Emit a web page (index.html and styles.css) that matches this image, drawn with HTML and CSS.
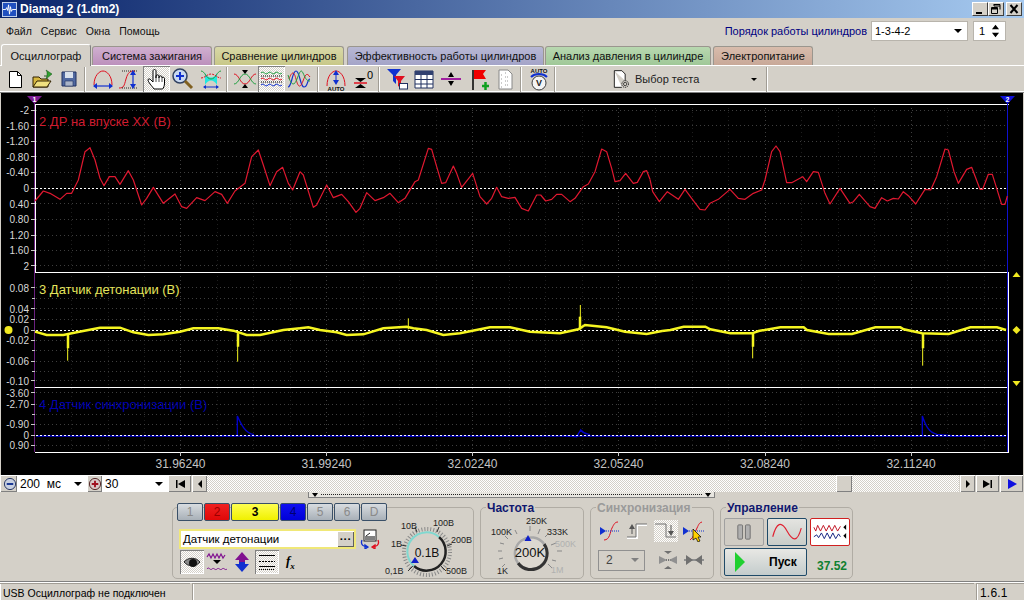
FILE: index.html
```html
<!DOCTYPE html>
<html lang="ru">
<head>
<meta charset="utf-8">
<title>Diamag 2</title>
<link rel="stylesheet" href="styles.css">
</head>
<body>
<div class="app">
  <header class="titlebar">
    <svg class="app-icon" viewBox="0 0 16 16"><rect x="0.5" y="0.5" width="15" height="15" fill="#2050c0" stroke="#c8d8f0"/><path d="M1 8h3l1-2 1 3 1-6 1 10 1-8 1 5 1-2h4" fill="none" stroke="#fff"/></svg>
    <span class="title-text">Diamag 2 (1.dm2)</span>
    <div class="win-btns">
      <span class="win-btn"><svg viewBox="0 0 14 12"><rect x="3" y="9" width="6" height="2"/></svg></span>
      <span class="win-btn"><svg viewBox="0 0 14 12"><path d="M5 1.5h6v5M5 1v2h6M2.500 5.500h6v5h-6zM2.500 4.500h6v1.500h-6z" fill="none" stroke="#000"/></svg></span>
      <span class="win-btn win-close"><svg viewBox="0 0 14 12"><path d="M3.500 2l7 8M10.500 2l-7 8" stroke="#000" stroke-width="2"/></svg></span>
    </div>
  </header>

  <nav class="menubar">
    <span class="menu-item">Файл</span>
    <span class="menu-item">Сервис</span>
    <span class="menu-item">Окна</span>
    <span class="menu-item">Помощь</span>
    <span class="order-label">Порядок работы цилиндров</span>
    <div class="combo combo-order"><span>1-3-4-2</span><i class="combo-arrow"></i></div>
    <div class="spinner"><span>1</span><svg viewBox="0 0 10 18"><path d="M5 2l4 5H1z M5 16l4-5H1z"/></svg></div>
  </nav>

  <div class="tabs">
    <span class="tab tab-active">Осциллограф</span>
    <span class="tab tab-ign">Система зажигания</span>
    <span class="tab tab-cmp">Сравнение цилиндров</span>
    <span class="tab tab-eff">Эффективность работы цилиндров</span>
    <span class="tab tab-prs">Анализ давления в цилиндре</span>
    <span class="tab tab-pwr">Электропитание</span>
  </div>

  <div class="toolbar">
    <span class="tool"><svg viewBox="0 0 24 24"><path d="M6.500 4.500h8l4 4v12h-12z" fill="#fff" stroke="#000"/><path d="M14.500 4.500v4h4" fill="none" stroke="#000"/></svg></span>
    <span class="tool"><svg viewBox="0 0 24 24"><path d="M3 20V10h6l2 2h7v8z" fill="#d8b840" stroke="#302000"/><path d="M3 20l4-6h14l-4 6z" fill="#f0e080" stroke="#302000"/><path d="M14 9h3V5l-1-2 6 4-6 5 1-3z" fill="#30a030" stroke="#105010" stroke-width=".5"/></svg></span>
    <span class="tool"><svg viewBox="0 0 24 24"><path d="M5 5h14v14H5z" fill="#5068a0" stroke="#203060"/><path d="M8 5h8v6H8z" fill="#d8e0ec"/><path d="M8 14h8v5H8z" fill="#aab4c8" stroke="#203060" stroke-width=".6"/></svg></span>
    <i class="sep"></i>
    <span class="tool"><svg viewBox="0 0 24 24"><path d="M3 18C3 9 8 4 12 4s9 5 9 14" fill="none" stroke="#e01020"/><path d="M3 19h18" stroke="#1030d0" stroke-width="1.200"/><path d="M2 19l4-3v6zM22 19l-4-3v6z" fill="#1030d0"/></svg></span>
    <span class="tool"><svg viewBox="0 0 24 24"><path d="M1 21c5 0 5-2 7-9s4-8 9-8" fill="none" stroke="#e01020"/><path d="M4 4h16M4 21h16" stroke="#000" stroke-width=".8" stroke-dasharray="1 1"/><path d="M15 5v15" stroke="#1030d0" stroke-width="1.200"/><path d="M15 3l-3 5h6zM15 22l-3-5h6z" fill="#1030d0"/></svg></span>
    <span class="tool tool-on"><svg viewBox="0 0 24 24"><path d="M9 22C7 19 3 15 3 13c0-1.500 2-1.500 3 0l2 2V4c0-2 3-2 3 0v7-2c0-1.500 3-1.500 3 0v2-1c0-1.500 3-1.500 3 0v1c0-1 2.500-1 2.500.5V16c0 3-1 5-2 6z" fill="#fff" stroke="#000"/><path d="M11 11v4M14 11v4M17 11v4" stroke="#000" stroke-width=".7"/></svg></span>
    <span class="tool tool-shift"><svg viewBox="0 0 24 24"><circle cx="10" cy="9" r="7" fill="#c8d8f0" stroke="#304060" stroke-width="1.500"/><path d="M6 9h8M10 5v8" stroke="#1030d0" stroke-width="2"/><path d="M15 14l7 7" stroke="#806020" stroke-width="3"/></svg></span>
    <span class="tool"><svg viewBox="0 0 24 24"><path d="M6 6c3 6 9 6 12 0v12c-3-6-9-6-12 0z" fill="#20e8e0"/><path d="M2 4c4 0 5 8 10 8s6-8 10-8" fill="none" stroke="#20a040"/><path d="M2 11c4 0 6-4 10-4s6 4 10 4" fill="none" stroke="#e01020" stroke-dasharray="2 1"/><path d="M5 20h14" stroke="#1030d0"/><path d="M4 20l3-2v4zM20 20l-3-2v4z" fill="#1030d0"/></svg></span>
    <i class="sep"></i>
    <span class="tool"><svg viewBox="0 0 24 24"><path d="M1 7c5 0 6 10 11 10s6-10 11-10" fill="none" stroke="#e01020"/><path d="M1 17c5 0 6-10 11-10s6 10 11 10" fill="none" stroke="#20a040"/><path d="M12 7L9 3h6zM12 17l-3 4h6z"/></svg></span>
    <span class="tool tool-on"><svg viewBox="0 0 24 24"><path d="M1 6c3-3 4 3 7 0s4 3 7 0 4 3 7 0" fill="none" stroke="#20a040"/><path d="M1 9h22M1 15h22" stroke="#000" stroke-dasharray="1 1"/><path d="M1 12c3-3 4 3 7 0s4 3 7 0 4 3 7 0" fill="none" stroke="#e01020"/><path d="M1 18c3-3 4 3 7 0s4 3 7 0 4 3 7 0" fill="none" stroke="#1030d0"/></svg></span>
    <span class="tool"><svg viewBox="0 0 24 24"><path d="M1 20C5 20 5 4 9 4s4 16 8 16 3-8 6-8" fill="none" stroke="#1030d0" stroke-width="1.200"/><path d="M2 12c3-8 5-8 7 0s4 10 7 2 4-8 7-4" fill="none" stroke="#e01020"/><path d="M1 8c3 10 6 12 9 4s4-10 6-6 3 8 7 8" fill="none" stroke="#20a040"/></svg></span>
    <i class="sep sep-wide"></i>
    <span class="tool"><svg viewBox="0 0 24 24"><path d="M3 19C3 9 8 4 12 4s9 5 9 15" fill="none" stroke="#e01020"/><path d="M12 5v11" stroke="#1030d0"/><path d="M12 3L9 8h6zM12 18l-3-5h6z" fill="#1030d0"/><text class="tool-tiny" x="12" y="24">AUTO</text></svg></span>
    <span class="tool"><svg viewBox="0 0 24 24"><path d="M4 11h11l-5.500 4zM4 21h11l-5.500-4z" fill="#000"/><path d="M3 16h13" stroke="#e01020" stroke-width="1.500"/><text class="tool-zero" x="16" y="12">0</text></svg></span>
    <i class="sep"></i>
    <span class="tool"><svg viewBox="0 0 24 24"><path d="M2 2h14l-5 6v9l-3-3V8z" fill="#1030d0"/><path d="M9 9h11l-4 5v7l-3-2v-5z" fill="#e01020"/><rect x="14.500" y="16.500" width="8" height="5.500" fill="#fff" stroke="#203060"/></svg></span>
    <span class="tool"><svg viewBox="0 0 24 24"><path d="M3 4h18v17H3z" fill="#fff" stroke="#203060"/><path d="M3 4h18v4H3z" fill="#304070"/><path d="M9 8v13M15 8v13M3 12.500h18M3 17h18" stroke="#203060"/></svg></span>
    <span class="tool"><svg viewBox="0 0 24 24"><path d="M2 12h20" stroke="#a020a0" stroke-width="2"/><path d="M12 5L9 10h6zM12 19l-3-5h6z"/></svg></span>
    <span class="tool"><svg viewBox="0 0 24 24"><path d="M7 3v20" stroke="#000" stroke-width="1.500"/><path d="M8 3h12l-3 4 3 5H8z" fill="#f00000"/><path d="M16 19h7M19.500 15v8" stroke="#10a020" stroke-width="2.500"/></svg></span>
    <span class="tool"><svg viewBox="0 0 24 24"><path d="M6 3h9l4 4v15H6z" fill="#fff" stroke="#888"/><path d="M8 8h2M8 12h2M8 16h2M8 20h2M12 6h2M12 10h4M12 14h4M12 18h4" stroke="#999" stroke-dasharray="1 1"/></svg></span>
    <i class="sep"></i>
    <span class="tool"><svg viewBox="0 0 24 24"><text class="tool-tiny" x="12" y="6">AUTO</text><path d="M4 10c4-4 12-4 16 0" fill="none" stroke="#1030d0" stroke-width="2"/><circle cx="12" cy="16" r="7" fill="#f4f4f4" stroke="#404040"/><text class="tool-v" x="12" y="19">V</text></svg></span>
    <i class="sep"></i>
    <div class="test-select">
      <svg viewBox="0 0 24 24"><path d="M4 2h9l4 4v8M4 2v20h9" fill="#fff" stroke="#000"/><circle cx="17" cy="18" r="4" fill="none" stroke="#000" stroke-width="1" stroke-dasharray="1.500 1"/><circle cx="17" cy="18" r="2" fill="none" stroke="#000" stroke-width=".8"/></svg>
      <span>Выбор теста</span>
      <i class="small-arrow"></i>
    </div>
    <i class="sep"></i>
  </div>

  <svg class="scope" viewBox="0 93 1024 382" width="1024" height="382">
    <rect class="bg-black" x="0" y="93" width="1024" height="382"/>
    <path class="edge" d="M.5 93v382M1023.500 93v382"/>
    <path class="grid-minor" d="M71.500 104v348M108.500 104v348M144.500 104v348M217.500 104v348M253.500 104v348M290.500 104v348M363.500 104v348M399.500 104v348M436.500 104v348M509.500 104v348M545.500 104v348M582.500 104v348M655.500 104v348M692.500 104v348M728.500 104v348M801.500 104v348M838.500 104v348M874.500 104v348M947.500 104v348M984.500 104v348"/>
    <path class="grid" d="M180.500 104v348M326.500 104v348M472.500 104v348M618.500 104v348M765.500 104v348M911.500 104v348"/>
    <path class="grid" d="M36 110.500h971M36 125.500h971M36 141.500h971M36 156.500h971M36 172.500h971M36 203.500h971M36 219.500h971M36 235.500h971M36 250.500h971M36 265.500h971M36 287.500h971M36 298.500h971M36 308.500h971M36 319.500h971M36 340.500h971M36 350.500h971M36 361.500h971M36 371.500h971M36 380.500h971M36 392.500h971M36 404.500h971M36 414.500h971M36 424.500h971M36 445.500h971"/>

    <path class="frame-purple" d="M34.500 100V452"/>
    <path class="frame-white" d="M35.500 104V272M35 104.500h974M35 272.500h974M35 387.500h974M35 452.500h974M1008.500 272v181"/>
    <path class="frame-blue" d="M1007.500 100V452"/>
    <path class="axis-tick" d="M31 110.500h4M31 125.500h4M31 141.500h4M31 156.500h4M31 172.500h4M31 188.500h4M31 203.500h4M31 219.500h4M31 235.500h4M31 250.500h4M31 265.500h4M31 287.500h4M32 298.500h3M31 308.500h4M31 319.500h4M31 330.500h4M31 340.500h4M32 350.500h3M31 361.500h4M32 371.500h3M31 380.500h4M31 392.500h4M31 404.500h4M32 414.500h3M31 424.500h4M31 435.500h4M31 445.500h4M180.500 452v4M326.500 452v4M472.500 452v4M618.500 452v4M765.500 452v4M911.500 452v4"/>

    <g class="ylab">
      <text x="29" y="114">-2</text><text x="29" y="129.500">-1.60</text><text x="29" y="145">-1.20</text><text x="29" y="160.500">-0.80</text><text x="29" y="176">-0.40</text><text x="29" y="192">0</text><text x="29" y="207.500">0.40</text><text x="29" y="223">0.80</text><text x="29" y="239">1.20</text><text x="29" y="254">1.60</text><text x="29" y="269.500">2</text>
      <text x="29" y="291.500">0.08</text><text x="29" y="312.500">0.04</text><text x="29" y="323">0.02</text><text x="29" y="334">0</text><text x="29" y="344">-0.02</text><text x="29" y="365">-0.06</text><text x="29" y="384.500">-0.10</text>
      <text x="29" y="396.500">-3.60</text><text x="29" y="408">-2.70</text><text x="29" y="428">-0.90</text><text x="29" y="439">0</text><text x="29" y="449">0.90</text>
    </g>
    <g class="xlab">
      <text x="180.500" y="468">31.96240</text><text x="326.500" y="468">31.99240</text><text x="472.500" y="468">32.02240</text><text x="618.500" y="468">32.05240</text><text x="765" y="468">32.08240</text><text x="911" y="468">32.11240</text>
    </g>

    <path class="trace-blue" d="M36 436H1006"/>
    <g transform="translate(0,270) scale(.33333)"><path class="trace-blue" d="M660 497L700 497 712 496V438C722 460 735 490 762 494"/></g>
    <g transform="translate(300,270) scale(.33333)"><path class="trace-blue" d="M790 497L830 500 842 480C850 490 855 490 870 494M320 497L340 500"/></g>
    <g transform="translate(662,270) scale(.33333)"><path class="trace-blue" d="M740 499L775 497 781 496V438C790 465 800 488 825 493L880 498 960 498"/></g>
    <path class="zero" d="M36 188.500H1007M36 330.500H1007M36 435.500H1007"/>

    <g transform="translate(0,90) scale(.33333)"><polyline class="trace-red" points="105,333 130,303 150,310 180,328 200,310 215,310 235,270 255,185 270,173 285,210 300,265 312,287 328,260 345,260 360,283 385,242 400,270 425,345 440,325 460,292 490,340 525,312 545,350 560,355 590,323 615,332 645,305 665,313 682,340 705,303 735,280 755,200 775,180 790,225 810,287 830,245 848,232 865,280 878,300 900,245"/></g>
    <g transform="translate(280,130) scale(.33333)"><polyline class="trace-red" points="60,125 70,135 100,232 110,225 140,165 160,203 185,193 205,215 228,247 240,235 260,188 285,212 310,203 330,190 355,218 375,205 405,155 415,150 445,55 455,58 470,110 485,160 497,158 520,108 530,130 545,172 578,130 600,200 620,222 635,205 650,172 665,200 685,205 705,202 725,235 745,243 770,195 782,195 797,213 815,208 830,193 845,193 870,215 885,205 910,170 925,162 945,125 965,57 980,65 995,115 1005,155 1020,152 1037,130 1060,160 1072,157 1090,125 1100,122 1110,148"/></g>
    <g transform="translate(650,130) scale(.33333)"><polyline class="trace-red" points="0,148 8,185 28,215 52,185 85,208 105,178 125,205 150,238 165,240 180,220 205,208 240,178 265,205 285,208 310,190 335,180 345,150 365,65 378,48 390,65 410,158 425,158 458,140 470,155 490,125 505,127 525,190 540,222 570,175 600,220 610,215 628,193 660,230 675,235 695,203 712,213 730,205 745,207 760,185 775,197 797,222 825,178 842,180 860,140 885,57 895,60 912,125 925,160 950,118 965,112 990,178 998,178 1015,133 1027,133 1055,223 1065,223 1072,198"/></g>

    <g transform="translate(0,270) scale(.33333)"><polyline class="trace-yel" points="105,185 140,195 190,195 230,187 300,173 360,173 400,187 445,195 490,193 540,185 580,175 655,175 700,182 740,195 780,195 850,180 900,175"/><path class="spike" d="M203 195V272M713 190V275"/><path class="trace-yel" d="M204 195V235M714 190V230"/></g>
    <g transform="translate(300,270) scale(.33333)"><polyline class="trace-yel" points="0,175 25,172 60,180 110,187 140,195 190,193 250,175 320,170 340,175 380,180 430,195 480,190 570,172 630,172 690,185 780,190 835,178 855,165 920,172 975,185 1040,192 1086,183"/><path class="spike" d="M325 178V145M841 178V105"/><path class="trace-yel" d="M840 178V140"/></g>
    <g transform="translate(662,270) scale(.33333)"><polyline class="trace-yel" points="0,183 25,180 65,170 130,170 145,178 205,190 270,190 290,183 355,172 425,172 435,180 500,192 570,192 640,172 715,172 725,178 780,190 860,192 925,172 1005,172 1032,180"/><path class="spike" d="M272 190V265M782 190V287"/><path class="trace-yel" d="M273 190V230M783 190V235"/></g>

    <text class="name-red" x="39" y="126">2 ДР на впуске ХХ (В)</text>
    <text class="name-yel" x="39" y="294">3 Датчик детонации (В)</text>
    <text class="name-blue" x="39" y="409">4 Датчик синхронизации (В)</text>

    <path class="mark-purple" d="M27 96h15l-7.500 8z"/><text class="mark-num" x="34.500" y="102">1</text>
    <path class="mark-blue" d="M1000 96h15l-7.500 8z"/><text class="mark-num" x="1007.500" y="102">2</text>
    <circle class="mark-yel" cx="8.500" cy="330" r="4"/>
    <path class="mark-yel" d="M1012.500 277l4-5 4 5zM1016.500 326l4 4-4 4-4-4zM1012.500 381l4 5 4-5z"/>
  </svg>

  <div class="scrollrow">
    <span class="round-btn"><svg viewBox="0 0 15 15"><circle cx="7.500" cy="7.500" r="6" fill="#c8d0e0" stroke="#203060"/><path d="M4 7.500h7" stroke="#103090" stroke-width="2"/></svg></span>
    <div class="combo combo-ms"><span>200&nbsp; мс</span><i class="combo-arrow"></i></div>
    <span class="round-btn"><svg viewBox="0 0 15 15"><circle cx="7.500" cy="7.500" r="6" fill="#d8c8c8" stroke="#502020"/><path d="M4 7.500h7M7.500 4v7" stroke="#a01020" stroke-width="2"/></svg></span>
    <div class="combo combo-30"><span>30</span><i class="combo-arrow"></i></div>
    <span class="nav-btn nav-wide"><svg viewBox="0 0 14 10"><path d="M3 1v8h1.500V1zM12 1L5 5l7 4z"/></svg></span>
    <span class="nav-btn nav-narrow"><svg viewBox="0 0 8 10"><path d="M6 1L2 5l4 4z"/></svg></span>
    <div class="track"><span class="thumb"></span></div>
    <span class="nav-btn nav-narrow"><svg viewBox="0 0 8 10"><path d="M2 1l4 4-4 4z"/></svg></span>
    <span class="nav-btn nav-wide"><svg viewBox="0 0 14 10"><path d="M2 1l7 4-7 4zM9.500 1v8H11V1z"/></svg></span>
    <span class="nav-btn nav-wide"><svg viewBox="0 0 14 10"><path class="play-blue" d="M3 0l9 5-9 5z"/></svg></span>
  </div>

  <div class="bottom">
    <div class="splitter"><i class="split-arrow"></i><span class="split-dots"></span><i class="split-arrow"></i></div>
    <div class="groups">
      <section class="group group-channel">
        <div class="channel-left">
          <div class="channels">
            <span class="chan chan-off">1</span>
            <span class="chan chan-red">2</span>
            <span class="chan chan-yellow">3</span>
            <span class="chan chan-blue">4</span>
            <span class="chan chan-off">5</span>
            <span class="chan chan-off">6</span>
            <span class="chan chan-off">D</span>
          </div>
          <div class="name-row">
            <div class="name-field"><span>Датчик детонации</span><span class="dots-btn">···</span></div>
            <svg class="swap-icon" viewBox="0 0 20 20"><rect x="4" y="1" width="12" height="11" fill="#fff" stroke="#222"/><rect x="5" y="7" width="10" height="4" fill="#808080"/><path d="M6 7l4-3" stroke="#222"/><path d="M2 11c-2 5 2 7 6 7M8 18l-3-2v4z" fill="none" stroke="#1030d0" stroke-width="1.300"/><path d="M18 11c2 5-2 7-6 7M12 18l3-2v4z" fill="none" stroke="#e01020" stroke-width="1.300"/></svg>
          </div>
          <div class="chan-tools">
            <span class="ct ct-on"><svg viewBox="0 0 22 22"><path d="M3 11c4-5 12-5 16 0-4 5-12 5-16 0z" fill="#888" stroke="#222"/><circle cx="12" cy="12" r="4" fill="#111"/></svg></span>
            <span class="ct"><svg viewBox="0 0 22 22"><path d="M1 6l2-3 2 4 2-4 2 4 2-4 2 4 2-4 2 4 2-3" fill="none" stroke="#801090" stroke-width="1.200"/><path d="M7 9h8l-4 4z"/><path d="M1 18c2-3 3 2 5 0s3 2 5 0 3 2 5 0 3 2 5 0" fill="none" stroke="#801090"/></svg></span>
            <span class="ct"><svg viewBox="0 0 22 22"><path d="M11 1l7 8h-4v2H8V9H4z" fill="#801090"/><path d="M11 21l7-8h-4v-2H8v2H4z" fill="#1030d0"/></svg></span>
            <span class="ct ct-on"><svg viewBox="0 0 22 22"><path d="M3 4.500h16M3 15.500h16" stroke="#000"/><path d="M3 10.500h16" stroke="#000" stroke-dasharray="2 1"/><path d="M3 18.500h16" stroke="#000" stroke-dasharray="1 1"/></svg></span>
            <span class="fx">f<sub>x</sub></span>
          </div>
        </div>
        <svg class="knob-ch" viewBox="-2 1 100 71">
          <circle class="k-ticks" cx="52" cy="45" r="23"/>
          <path class="k-major" d="M38 59l-5 5M31 39l-5-1M42 25l-2-5M62 25l2-5M72 39l5-2M66 59l5 5"/>
          <circle class="k-face" cx="52" cy="45" r="20"/>
          <path class="k-dark" d="M64 30A19 19 0 1 1 39 59"/>
          <path class="k-cyan" d="M39 59A19 19 0 1 1 64 30"/>
          <path class="k-mark" d="M40 50l4 6h-8z"/>
          <text class="k-val" x="52" y="50">0.1В</text>
          <g class="k-lab"><text x="10" y="66.500">0,1В</text><text x="16" y="39.500">1В</text><text x="26" y="21.500">10В</text><text x="58" y="18.500">100В</text><text x="76" y="35.500">200В</text><text x="71" y="66.500">500В</text></g>
        </svg>
      </section>

      <section class="group group-freq">
        <h3 class="legend">Частота</h3>
        <svg class="knob-fr" viewBox="1 1 102 70">
          <path class="k-fine" d="M22 60l3-3M19 52l4-1M18 44h4M20 36l4 1M25 29l3 3M35 23l2 4M50 19v5M60 22l-2 5M68 27l-3 3M76 36l-5 2M82 44h-5M76 54l-4-1M72 61l-4-4"/>
          <circle class="f-face" cx="50" cy="45" r="16"/>
          <path class="f-dark" d="M64 37A16 16 0 0 1 38 56"/>
          <path class="f-light" d="M38 56A16 16 0 0 1 64 37"/>
          <path class="k-mark" d="M48 28l3.500 6h-7z"/>
          <text class="f-val" x="50" y="50">200K</text>
          <g class="k-lab"><text x="11" y="27.500">100K</text><text x="46" y="17">250K</text><text x="67" y="27.500">333K</text><text class="k-dim" x="75" y="39.500">500K</text><text x="17" y="66.500">1K</text><text class="k-dim" x="71" y="65.500">1M</text></g>
        </svg>
      </section>

      <section class="group group-sync">
        <h3 class="legend legend-dim">Синхронизация</h3>
        <div class="sync-row">
          <span class="sy"><svg viewBox="0 0 24 22"><path d="M6 20c6 0 6-8 8-12s3-6 6-6" fill="none" stroke="#e01020"/><path d="M2 7l6 4-6 4z" fill="#1030d0"/><path d="M8 11h14" stroke="#1030d0" stroke-dasharray="1 1"/></svg></span>
          <span class="sy"><svg viewBox="0 0 24 22"><path d="M1 18h10V5h10" fill="none" stroke="#fff" stroke-width="2"/><path d="M1 17h9V4h11" fill="none" stroke="#707070"/><path d="M6 14V6" stroke="#555"/><path d="M6 4L3 9h6z" fill="#555"/></svg></span>
          <span class="sy sy-on"><svg viewBox="0 0 24 22"><path d="M1 4h11v13h10" fill="none" stroke="#707070"/><path d="M17 5v8" stroke="#555"/><path d="M17 16l-3-5h6z" fill="#555"/></svg></span>
          <span class="sy"><svg viewBox="0 0 24 22"><path d="M8 20c4-3 5-8 7-12s2-5 5-6" fill="none" stroke="#e01020"/><path d="M1 7l6 4-6 4z" fill="#1030d0"/><path d="M7 11h15" stroke="#1030d0" stroke-dasharray="1 1"/><path d="M11 9v11l3-2 2 4 2-1-2-4h3z" fill="#ffd000" stroke="#000" stroke-width=".7"/></svg></span>
        </div>
        <div class="sync-row sync-row2">
          <div class="combo-dis"><span>2</span><i class="small-arrow dim-arrow"></i></div>
          <span class="sy"><svg viewBox="0 0 24 22"><path d="M4 11h16" stroke="#707070" stroke-width="2" stroke-dasharray="1 1"/><path d="M3 7l8 4-8 4zM21 7l-8 4 8 4z" fill="#909090"/><path d="M12 5l-4-3h8zM12 17l-4 3h8z" fill="#707070"/></svg></span>
          <span class="sy"><svg viewBox="0 0 24 22"><path d="M2 11h20" stroke="#909090" stroke-width="2"/><path d="M4 6l7 5-7 5zM20 6l-7 5 7 5z" fill="#707070"/></svg></span>
        </div>
      </section>

      <section class="group group-ctrl">
        <h3 class="legend">Управление</h3>
        <div class="ctrl-row">
          <span class="cb cb-dis"><svg viewBox="0 0 40 28"><rect x="13.500" y="6.500" width="5" height="15" rx="1" fill="#b0b0b0" stroke="#707070"/><rect x="21.500" y="6.500" width="5" height="15" rx="1" fill="#b0b0b0" stroke="#707070"/></svg></span>
          <span class="cb cb-act"><svg viewBox="0 0 40 28"><path d="M5 19C9 4 14 2 20 13s11 12 15-3" fill="none" stroke="#e02030" stroke-width="1.200"/></svg></span>
          <span class="cb cb-red"><svg viewBox="0 0 40 28"><path d="M3 9l2 4 2-6 3 6 3-6 3 6 3-6 3 6 3-6 3 6 3-5" fill="none" stroke="#c01020"/><path d="M3 19l3-2 2 3 3-5 3 6 3-6 3 6 3-6 3 6 3-5 2 3" fill="none" stroke="#102080"/><path d="M37 6v6l-3-3zM37 15v6l-3-3z"/></svg></span>
        </div>
        <div class="ctrl-row">
          <span class="cb cb-start"><svg viewBox="0 0 12 22"><path d="M1 1l10 10L1 21z" fill="#20d030"/></svg><b>Пуск</b></span>
          <span class="rate">37.52</span>
        </div>
      </section>
    </div>
  </div>

  <footer class="status">
    <span class="st st-a">USB Осциллограф не подключен</span>
    <span class="st st-b"></span>
    <span class="st st-c">1.6.1</span>
  </footer>
</div>
</body>
</html>
```

FILE: styles.css
```css
* { box-sizing: border-box; }
html, body { margin: 0; padding: 0; background: #d4d0c8; }
.app {
  width: 1024px; height: 600px; overflow: hidden;
  display: flex; flex-direction: column;
  background: #d4d0c8; color: #000;
  font: 11px "Liberation Sans", Arial, sans-serif;
}
svg { display: block; }

/* Title bar */
.titlebar {
  height: 18px; flex: none; display: flex; align-items: center; padding: 0 2px;
  background: linear-gradient(90deg, #0a246a 0%, #a6caf0 100%);
}
.app-icon { width: 15px; height: 15px; }
.title-text { margin-left: 3px; color: #fff; font-weight: bold; font-size: 12px; }
.win-btns { margin-left: auto; display: flex; gap: 0; }
.win-btn {
  width: 16px; height: 14px; background: #d4d0c8;
  border: 1px solid; border-color: #fff #404040 #404040 #fff;
}
.win-btn svg { width: 14px; height: 12px; }
.win-close { margin-left: 2px; }

/* Menu bar */
.menubar { height: 25px; flex: none; display: flex; align-items: center; padding: 0 18px 0 6px; }
.menu-item { margin-right: 9px; font-size: 10.500px; color: #111; }
.order-label { margin-left: auto; color: #000080; font-size: 11px; margin-right: 4px; }
.combo {
  height: 20px; display: flex; align-items: center; background: #fff; padding: 0 0 0 3px;
  border: 1px solid #b8b4ac; font-size: 11px; position: relative;
}
.combo-order { width: 97px; }
.combo-arrow {
  margin-left: auto; margin-right: 5px; width: 0; height: 0;
  border: 4px solid transparent; border-top: 4px solid #000; border-bottom: 0;
}
.spinner {
  width: 33px; height: 20px; margin-left: 5px; background: #fff; border: 1px solid #b8b4ac;
  display: flex; align-items: center; justify-content: space-between; padding: 0 5px 0 5px;
}
.spinner svg { width: 9px; height: 16px; }

/* Tabs */
.tabs { height: 23px; flex: none; display: flex; align-items: flex-end; padding-left: 1px; border-bottom: 1px solid #fff; }
.tab {
  height: 19px; display: flex; align-items: center; justify-content: center;
  border: 1px solid #9a968e; border-bottom: 0; border-radius: 3px 3px 0 0;
  color: #111; margin-right: 2px; font-size: 11px;
}
.tab-active { height: 22px; width: 90px; background: #d4d0c8; margin-right: 1px; border-color: #fff #808080 #d4d0c8 #fff; position: relative; top: 1px; }
.tab-ign { width: 120px; background: linear-gradient(#d0b0d0, #bc90bc); }
.tab-cmp { width: 130px; margin-right: 3px; background: linear-gradient(#d8d8a8, #c8c888); }
.tab-eff { width: 197px; margin-right: 1px; background: linear-gradient(#b8b8d4, #a4a4c8); }
.tab-prs { width: 166px; margin-right: 2px; background: linear-gradient(#b8d8b0, #a0c898); }
.tab-pwr { width: 100px; background: linear-gradient(#d8bcac, #c8a898); }

/* Toolbar */
.toolbar {
  height: 27px; flex: none; display: flex; align-items: center; padding-left: 1px;
  border-bottom: 1px solid #808080; box-shadow: inset 0 -1px 0 #fff;
}
.tool { width: 27px; height: 26px; flex: none; display: flex; align-items: center; justify-content: center; }
.tool svg { width: 24px; height: 24px; }
.tool-shift svg { margin-left: -4px; }
.tool-on {
  background: repeating-conic-gradient(#fff 0 25%, #d4d0c8 0 50%) 0 0 / 2px 2px;
  box-shadow: inset 1px 1px 0 #808080, inset -1px -1px 0 #fff;
}
.sep { flex: none; width: 2px; height: 25px; margin: 0 3px 0 2px; border-left: 1px solid #a09c94; border-right: 1px solid #fff; }
.sep-wide { margin: 0 3px 0 5px; }
.tool-tiny { font: bold 6px "Liberation Sans", sans-serif; text-anchor: middle; fill: #111; }
.tool-zero { font: 11px "Liberation Sans", sans-serif; fill: #000; }
.tool-v { font: bold 9px "Liberation Sans", sans-serif; text-anchor: middle; fill: #222; }
.test-select {
  width: 153px; margin-left: 52px; display: flex; align-items: center; font-size: 11px; color: #222;
}
.test-select svg { width: 20px; height: 22px; margin-right: 4px; }
.small-arrow {
  margin-left: auto; margin-right: 7px; width: 0; height: 0;
  border: 3px solid transparent; border-top: 3px solid #000; border-bottom: 0;
}

/* Scope */
.scope { flex: none; }
.bg-black { fill: #000; }
.edge { stroke: #d4d0c8; fill: none; }
.grid { stroke: #3e3e3e; stroke-dasharray: 1 3; fill: none; }
.grid-minor { stroke: #1e1e1e; stroke-dasharray: 1 3; fill: none; }
.frame-white { stroke: #fff; fill: none; }
.frame-purple { stroke: #6a2080; fill: none; }
.frame-blue { stroke: #1010d0; fill: none; }
.axis-tick { stroke: #c8c8c8; fill: none; }
.zero { stroke: #fff; stroke-dasharray: 2 2; fill: none; }
.ylab text { font: 10px "Liberation Sans", sans-serif; fill: #d8d8d8; text-anchor: end; }
.xlab text { font: 12px "Liberation Sans", sans-serif; fill: #c4c4c4; text-anchor: middle; }
.trace-red { fill: none; stroke: #e01830; stroke-width: 1.200px; stroke-linejoin: round; vector-effect: non-scaling-stroke; }
.trace-yel { fill: none; stroke: #f4f420; stroke-width: 2.500px; vector-effect: non-scaling-stroke; }
.spike { fill: none; stroke: #f4f420; stroke-width: 1px; vector-effect: non-scaling-stroke; }
.trace-blue { fill: none; stroke: #0000c8; stroke-width: 1.400px; vector-effect: non-scaling-stroke; }
.name-red, .name-yel, .name-blue { font: 13px "Liberation Sans", sans-serif; }
.name-red { fill: #d01c30; }
.name-yel { fill: #e4e45c; }
.name-blue { fill: #0000b0; }
.mark-purple { fill: #7a1a90; }
.mark-blue { fill: #1010d8; }
.mark-num { font: bold 7px "Liberation Sans", sans-serif; fill: #fff; text-anchor: middle; }
.mark-yel { fill: #f0e820; }

/* Scroll row */
.scrollrow { height: 17px; flex: none; display: flex; align-items: stretch; }
.round-btn {
  flex: none; width: 15px; height: 17px; display: flex; align-items: center; justify-content: center;
  background: #d4d0c8; box-shadow: inset 1px 1px 0 #fff, inset -1px -1px 0 #808080;
}
.round-btn:first-child { width: 17px; padding-left: 2px; }
.round-btn svg { width: 14px; height: 14px; }
.scrollrow .combo { height: 17px; border: 0; font-size: 12px; }
.combo-ms { width: 70px; }
.combo-30 { width: 66px; }
.nav-btn {
  flex: none; height: 17px; display: flex; align-items: center; justify-content: center;
  background: #d4d0c8; box-shadow: inset 1px 1px 0 #fff, inset -1px -1px 0 #808080;
}
.nav-wide { width: 23px; margin-right: 1px; }
.nav-narrow { width: 15px; margin-right: 1px; }
.nav-btn svg { height: 10px; width: auto; }
.play-blue { fill: #1010e0; }
.track {
  flex: 1; display: flex; justify-content: flex-start;
  background: repeating-conic-gradient(#fff 0 25%, #d4d0c8 0 50%) 0 0 / 2px 2px;
  margin-left: -1px; padding-left: 629px; margin-right: 1px;
}
.thumb { width: 16px; background: #d4d0c8; box-shadow: inset 1px 1px 0 #fff, inset -1px -1px 0 #808080; }

/* Bottom */
.bottom { height: 90px; flex: none; border-bottom: 1px solid #808080; box-shadow: 0 1px 0 #fff; }
.splitter {
  width: 407px; height: 6px; margin-left: 308px; display: flex; align-items: center;
  border: 1px solid #808080; border-top: 0; padding: 0 3px; gap: 3px; background: #e8e6e0;
}
.split-arrow { flex: none; width: 0; height: 0; border: 3px solid transparent; border-top: 4px solid #000; border-bottom: 0; }
.split-dots { flex: 1; border-top: 1px dotted #202020; }
.groups { display: flex; gap: 6px; padding-left: 172px; margin-top: 9px; }
.group { position: relative; height: 72px; border: 1px solid #b0aca4; border-radius: 5px; flex: none; }
.legend {
  position: absolute; margin: 0; top: -6px; left: 5px; padding: 0 1px; height: 12px; line-height: 12px;
  background: #d4d0c8; color: #101870; font-size: 12px; font-weight: bold; white-space: nowrap;
}
.legend-dim { color: #9a9a9a; }

.group-channel { width: 302px; display: flex; }
.channel-left { width: 202px; flex: none; padding-left: 4px; }
.channels { display: flex; gap: 1px; margin-top: -5px; }
.chan {
  flex: none; width: 26px; height: 18px; display: flex; align-items: center; justify-content: center;
  border: 1px solid #3a5068; border-radius: 2px; font-size: 12px;
}
.chan-off { background: linear-gradient(#d8dce0, #a8b0b8); color: #8a8a8a; }
.chan-red { background: linear-gradient(#f02020, #e00808); color: #900; }
.chan-yellow { width: 48px; background: linear-gradient(#ffff50, #f0f000); font-weight: bold; }
.chan-blue { background: linear-gradient(#1010f0, #0000d8); color: #000070; }
.name-row { display: flex; align-items: center; margin-top: 8px; margin-left: 2px; }
.name-field {
  flex: none; width: 177px; height: 20px; border: 2px solid #f0e878; background: #fff; display: flex; align-items: center;
  justify-content: space-between; padding-left: 2px; font-size: 11.500px;
}
.dots-btn {
  width: 17px; height: 16px; background: #d4d0c8; display: flex; align-items: center; justify-content: center;
  font-weight: bold; box-shadow: inset 1px 1px 0 #fff, inset -1px -1px 0 #606060;
}
.swap-icon { flex: none; width: 20px; height: 20px; margin-left: 4px; }
.chan-tools { display: flex; align-items: center; margin-top: 1px; margin-left: 3px; }
.ct { width: 24px; height: 24px; flex: none; display: flex; align-items: center; justify-content: center; margin-right: 1px; }
.ct svg { width: 22px; height: 22px; }
.ct-on {
  background: repeating-conic-gradient(#fff 0 25%, #d4d0c8 0 50%) 0 0 / 2px 2px;
  box-shadow: inset 1px 1px 0 #808080, inset -1px -1px 0 #fff;
}
.fx { margin-left: 6px; font: italic bold 13px "Liberation Serif", serif; }
.fx sub { font-size: 9px; }

.knob-ch { width: 100px; height: 71px; flex: none; margin-left: -2px; }
.knob-fr { width: 102px; height: 70px; }
.k-ticks { fill: none; stroke: #888; stroke-width: 4; stroke-dasharray: 1 2; }
.k-major { stroke: #333; fill: none; }
.k-fine { stroke: #888; fill: none; }
.k-face { fill: #d4d0c8; }
.k-dark { fill: none; stroke: #222; stroke-width: 2.500; }
.k-cyan { fill: none; stroke: #80d8d0; stroke-width: 2; }
.k-mark { fill: #1020c8; }
.k-val { font: 12px "Liberation Sans", sans-serif; text-anchor: middle; fill: #111; }
.k-lab text { font: 9px "Liberation Sans", sans-serif; fill: #222; }
.k-lab .k-dim { fill: #b0b0b0; }
.f-face { fill: #dcd8d0; }
.f-dark { fill: none; stroke: #333; stroke-width: 3; }
.f-light { fill: none; stroke: #a8a8a8; stroke-width: 2.500; }
.f-val { font: 13px "Liberation Sans", sans-serif; text-anchor: middle; fill: #111; }

.group-freq { width: 104px; }
.group-sync { width: 124px; padding: 12px 0 0 7px; }
.sync-row { display: flex; gap: 4px; }
.sync-row2 { margin-top: 7px; gap: 2px; align-items: center; }
.sy { width: 24px; height: 22px; flex: none; display: flex; }
.sy svg { width: 24px; height: 22px; }
.sy-on { background: repeating-conic-gradient(#fff 0 25%, #d4d0c8 0 50%) 0 0 / 2px 2px; }
.combo-dis {
  width: 47px; height: 21px; margin-right: 9px; border: 1px solid #909090; display: flex; align-items: center;
  padding-left: 7px; font-size: 12px; color: #444;
}
.dim-arrow { border-top-color: #808080; border-width: 4px 4px 0; margin-right: 5px; }

.group-ctrl { width: 133px; padding: 10px 0 0 3px; }
.ctrl-row { display: flex; gap: 3px; margin-bottom: 2px; }
.cb { height: 28px; width: 40px; border-radius: 2px; display: flex; align-items: center; flex: none; }
.cb svg { width: 40px; height: 28px; }
.cb-dis { border: 1px solid #a0a0a0; background: #d0ccc4; }
.cb-act { border: 1px solid #1f4a68; background: linear-gradient(#e4e4e0, #c8ccc8); }
.cb-red { border: 1px solid #d02020; background: #fff; }
.cb-start {
  width: 83px; border: 1px solid #1f4a68; background: linear-gradient(#e8e8e4, #c4cccc);
  padding-left: 9px; font-size: 12px;
}
.cb-start svg { width: 12px; height: 22px; }
.cb-start b { margin-left: 23px; }
.rate { margin: 11px 0 0 7px; color: #108030; font-weight: bold; font-size: 12px; }

/* Status bar */
.status { height: 18px; flex: none; display: flex; margin-top: 1px; gap: 2px; }
.st { height: 18px; display: flex; align-items: center; padding-left: 3px; border-left: 1px solid #a09c94; border-top: 1px solid #a09c94; box-shadow: inset 1px 0 0 #fff; }
.st-a { width: 190px; border-left: 0; font-size: 10.500px; }
.st-b { width: 782px; }
.st-c { flex: 1; font-size: 12px; letter-spacing: .2px; }
```
